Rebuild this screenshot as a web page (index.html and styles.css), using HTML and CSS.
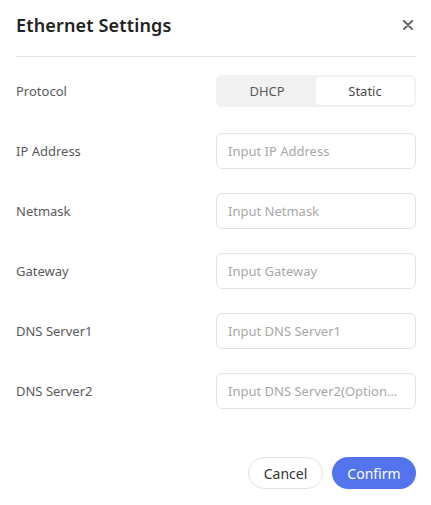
FILE: index.html
```html
<!DOCTYPE html>
<html>
<head>
<meta charset="utf-8">
<link rel="stylesheet" href="styles.css">
</head>
<body>
<div class="dialog">
  <div class="header">
    <h1 class="title">Ethernet Settings</h1>
    <button class="close" aria-label="Close">
      <svg width="10" height="10" viewBox="0 0 10 10"><path d="M1 1L9 9M9 1L1 9" stroke="#666" stroke-width="2" stroke-linecap="round"/></svg>
    </button>
  </div>
  <div class="form">
    <div class="row">
      <span class="label">Protocol</span>
      <div class="segmented">
        <span class="seg">DHCP</span>
        <span class="seg active">Static</span>
      </div>
    </div>
    <div class="row">
      <span class="label">IP Address</span>
      <input class="input" placeholder="Input IP Address">
    </div>
    <div class="row">
      <span class="label">Netmask</span>
      <input class="input" placeholder="Input Netmask">
    </div>
    <div class="row">
      <span class="label">Gateway</span>
      <input class="input" placeholder="Input Gateway">
    </div>
    <div class="row">
      <span class="label">DNS Server1</span>
      <input class="input" placeholder="Input DNS Server1">
    </div>
    <div class="row">
      <span class="label">DNS Server2</span>
      <input class="input" placeholder="Input DNS Server2(Optional)">
    </div>
  </div>
  <div class="footer">
    <button class="btn cancel">Cancel</button>
    <button class="btn confirm">Confirm</button>
  </div>
</div>
</body>
</html>
```

FILE: styles.css
```css
* { box-sizing: border-box; }
html, body { margin: 0; background: #fff; }
body { font-family: "Noto Sans", "Open Sans", sans-serif; color: #333; }
.dialog { width: 431px; padding: 0 15px 0 16px; }
.header {
  height: 57px;
  padding-bottom: 6px;
  display: flex;
  align-items: center;
  justify-content: space-between;
  border-bottom: 1px solid #e6e6e6;
}
.title { margin: 0; font-size: 18px; font-weight: 600; color: #222; letter-spacing: 0.15px; }
.close {
  border: 0; background: none; padding: 0; width: 16px; height: 16px;
  display: flex; align-items: center; justify-content: center; margin-right: 0;
}
.form { display: flex; flex-direction: column; gap: 24px; padding-top: 16px; }
.row { height: 36px; display: flex; align-items: center; justify-content: space-between; }
.label { font-size: 13px; color: #5a5a5a; }
.segmented {
  width: 200px; height: 32px; padding: 2px; background: #f2f2f2; border-radius: 6px;
  display: flex;
}
.seg { flex: 1; display: flex; align-items: center; justify-content: center; font-size: 13px; color: #5a5a5a; border-radius: 4px; }
.seg.active { background: #fff; color: #4a4a4a; }
.input {
  width: 200px; height: 36px; border: 1px solid #e3e3e3; border-radius: 6px;
  padding: 0 16px 0 11px; font-family: inherit; font-size: 13px; color: #333; outline: none;
  text-overflow: ellipsis;
}
.input::placeholder { color: #a8a8a8; }
.footer { display: flex; justify-content: flex-end; gap: 9px; margin-top: 48px; }
.btn {
  height: 32px; border-radius: 16px; font-family: inherit; font-size: 14px; padding: 0;
}
.cancel { width: 75px; background: #fff; border: 1px solid #e3e3e3; color: #333; }
.confirm { width: 84px; background: #5474ee; border: 0; color: #fff; }
```
